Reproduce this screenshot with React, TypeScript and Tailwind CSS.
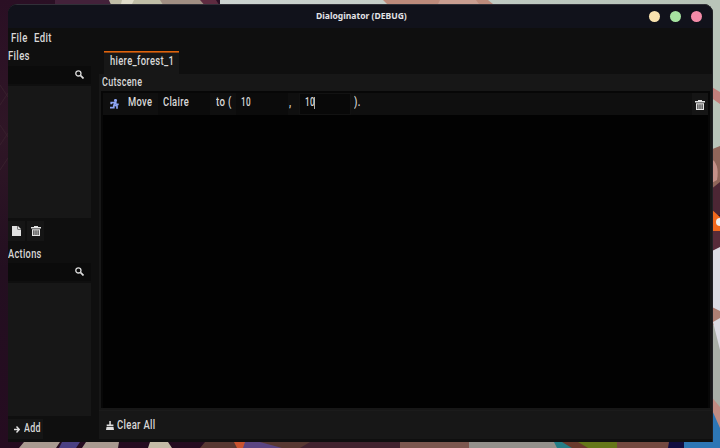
import React from "react";

function T({ children, s = 1, className = "" }: { children: React.ReactNode; s?: number; className?: string }) {
  return <span className={"inline-block origin-left whitespace-pre " + className} style={{ transform: `scaleX(${s})` }}>{children}</span>;
}

function Trash() {
  return (
    <svg className="shrink-0" width="10" height="10" viewBox="0 0 10 10" fill="#e4e4e4">
      <path d="M3 0H7V1H10V2.4H0V1H3Z" />
      <path fillRule="evenodd" d="M1 3.2H9V10H1ZM2.4 4.2V9H3.4V4.2ZM4.5 4.2V9H5.5V4.2ZM6.6 4.2V9H7.6V4.2Z" />
    </svg>
  );
}

function Search() {
  return (
    <div className="flex h-[18px] w-[83px] shrink-0 items-center justify-end bg-[#0b0b0b] pr-[7px] pb-[2px]">
      <svg width="9" height="9" viewBox="0 0 9 9" fill="none" stroke="#dcdcdc">
        <circle cx="3.4" cy="3.4" r="2.6" strokeWidth="1.3" />
        <path d="M5.4 5.4L8.5 8.5" strokeWidth="1.7" />
      </svg>
    </div>
  );
}

function Wallpaper() {
  return (
    <svg className="absolute inset-0" width="720" height="448" viewBox="0 0 720 448">
      <defs>
        <linearGradient id="left" x1="0" y1="0" x2="0" y2="1">
          <stop offset="0" stopColor="#2a0f24" />
          <stop offset=".3" stopColor="#2f1626" />
          <stop offset=".6" stopColor="#230f20" />
          <stop offset="1" stopColor="#250c20" />
        </linearGradient>
        <linearGradient id="sky" x1="0" x2="1">
          <stop offset="0" stopColor="#ccd3d0" />
          <stop offset="1" stopColor="#b5c2b6" />
        </linearGradient>
      </defs>
      <rect width="720" height="448" fill="url(#left)" />
      <path d="M0 85L8 97M0 105L8 93M0 125L8 137M0 145L8 133M0 170L8 158" stroke="#38202d" />
      <path d="M55 0H110V8H55Z" fill="#43213a" />
      <path d="M109 0H165V10H113Z" fill="#c0bda6" />
      <path d="M122 0H134L130 8H120Z" fill="#e0dcc9" />
      <path d="M220 0H720V10H220Z" fill="url(#sky)" />
      <path d="M160 0H202L222 8H165Z" fill="#a18f83" />
      <path d="M200 0H216L221 8H207Z" fill="#5e2b40" />
      <path d="M383 0H488L498 8H391Z" fill="#bd8b7b" />
      <path d="M440 0H476L482 8H436Z" fill="#c99e90" />
      <rect x="710" width="10" height="150" fill="#b9c4b9" />
      <path d="M710 86L720 92V104L710 97Z" fill="#c4807c" />
      <path d="M710 150L720 146V190H710Z" fill="#90665a" />
      <path d="M710 158Q720 163 717 180L710 184Z" fill="#c59189" />
      <path d="M710 190L720 182V215H710Z" fill="#4c2634" />
      <path d="M710 208L720 217V232H710Z" fill="#f0691d" />
      <circle cx="720" cy="222" r="4" fill="#eee" />
      <path d="M710 231H720V248L710 254Z" fill="#572b39" />
      <path d="M710 252L720 247V340H710Z" fill="#dddde4" />
      <path d="M710 306L720 311V330L710 332Z" fill="#ae8074" />
      <path d="M710 325H720V420H710Z" fill="#a9afa7" />
      <path d="M713 322L720 318V350Z" fill="#dddde4" />
      <path d="M710 395L720 407V448H710Z" fill="#c08c83" />
      <path d="M24 442H60L56 448H19ZM86 442H119L118 448H82Z" fill="#a99a90" />
      <path d="M62 442H80L76 448H59Z" fill="#4a4083" />
      <path d="M150 442H168L172 448H148Z" fill="#c4bba6" />
      <path d="M205 442H360V448H200Z" fill="#583832" />
      <path d="M240 442H260L282 448H240Z" fill="#5b4582" />
      <path d="M234 442H245L243 448H237Z" fill="#c9532f" />
      <path d="M310 442H400V448H300Z" fill="#42232f" />
      <path d="M400 442H470V448H400Z" fill="#7c574f" />
      <path d="M469 442H558V448H469Z" fill="#93908b" />
      <path d="M554 442H575L580 448H557Z" fill="#257e86" />
      <path d="M568 442H617V448H577Z" fill="#657718" />
      <path d="M562 442H578L588 448H572Z" fill="#6a3a2c" />
      <path d="M617 442H670V448H617Z" fill="#744940" />
      <path d="M669 442H685V448H668Z" fill="#100d40" />
      <path d="M684 442H708L712 410L720 428V448H684Z" fill="#2d76b5" />
    </svg>
  );
}

export default function App() {
  return (
    <div className="relative h-[448px] w-[720px] overflow-hidden font-['Roboto','Liberation_Sans',sans-serif] text-[12px] leading-[16px] font-medium tracking-[0.4px] text-[#d8d8d8]">
      <Wallpaper />
      <div className="relative ml-2 pt-1">
        <div className="flex h-[438px] w-[705px] flex-col overflow-hidden rounded-t-[9px] bg-[#0f0f0f] shadow-[inset_0_1px_0_#303038,inset_-1px_0_0_#202024]">
          <header className="mt-px mr-px flex h-[23px] shrink-0 items-center rounded-t-[8px] bg-[#11121b]">
            <div className="w-[308px]" />
            <div className="w-[90px] pb-px font-['Noto_Sans',sans-serif] text-[9.5px] font-bold tracking-normal text-[#e2e2e6]"><T s={0.9}>Dialoginator (DEBUG)</T></div>
            <div className="ml-auto flex gap-[10px] pr-[10px]">
              <i className="size-[11px] rounded-full bg-[#f9e2af]" />
              <i className="size-[11px] rounded-full bg-[#a6e3a1]" />
              <i className="size-[11px] rounded-full bg-[#f38ba8]" />
            </div>
          </header>
          <div className="flex h-[414px]">
            <aside className="flex w-[83px] shrink-0 flex-col">
              <nav className="flex h-[18px] pt-[2px] pl-[3px]">
                <div className="w-[23px]"><T s={0.8}>File</T></div><T s={0.8}>Edit</T>
              </nav>
              <div className="h-5 pt-[2px]"><T s={0.8}>Files</T></div>
              <Search />
              <div className="mt-[2px] h-[132px] bg-[#171717]" />
              <div className="mt-[3px] flex h-5 gap-[2px]">
                <button className="flex w-[17px] items-center justify-center bg-[#151515] pb-px">
                  <svg width="9" height="10" viewBox="0 0 9 10" fill="#e0e0e0"><path d="M0 0H5.5V3.5H9V10H0ZM6 0L9 3H6Z" /></svg>
                </button>
                <button className="flex w-[17px] items-center justify-center bg-[#151515] pb-px"><Trash /></button>
              </div>
              <div className="h-[22px] pt-[5px]"><T s={0.77}>Actions</T></div>
              <Search />
              <div className="mt-[2px] h-[133px] bg-[#171717]" />
              <button className="mt-[3px] flex h-5 w-[35px] items-center bg-[#151515] pl-[6px]">
                <svg className="mt-px shrink-0" width="6" height="7" viewBox="0 0 6 7" fill="none" stroke="#e0e0e0" strokeWidth="1.4"><path d="M0 3.5H5M2.5 .5L5.2 3.5L2.5 6.5" /></svg>
                <span className="ml-[4px] w-4 shrink-0 pb-[3px] text-left"><T s={0.74}>Add</T></span>
              </button>
            </aside>
            <main className="ml-2 flex w-[613px] flex-col">
              <div className="flex h-[46px] items-end pl-[5px]">
                <div className="h-[23px] w-[75px] bg-[#171717]">
                  <div className="h-px bg-[#e0630c]" />
                  <div className="h-px bg-[#8f4410]" />
                  <div className="pl-[6px]"><T s={0.785}>hiere_forest_1</T></div>
                </div>
              </div>
              <section className="flex h-[365px] flex-col bg-[#171717]">
                <div className="h-[17px] pl-[3px]"><T s={0.75}>Cutscene</T></div>
                <div className="ml-[2px] h-[317px] w-[609px] border-2 border-b-0 border-[#070707] bg-[#020202]">
                  <div className="flex h-[22px] bg-[#0f0f0f] *:pt-px">
                    <div className="w-[25px] pl-[7px]">
                      <svg className="mt-[5px]" width="9" height="10" viewBox="0 0 9 10" fill="none" stroke="#8da5f3" strokeWidth="1.7"><circle cx="5.5" cy="1.4" r="1.5" fill="#8da5f3" stroke="none" /><path d="M1.2 5.2V3.6H5.5L4 6L7 7V9.7M5.3 4L6.3 5.3H8.7M3.8 6V8.6H0" /></svg>
                    </div>
                    <div className="w-[30px]"><T s={0.78}>Move</T></div>
                    <div className="w-[52px] bg-[#0b0b0b] pl-[5px]"><T s={0.78}>Claire</T></div>
                    <div className="w-[26px] pl-[6px]"><T s={0.8}>to (</T></div>
                    <div className="w-[52px] bg-[#0b0b0b] pl-[5px]"><T s={0.68}>10</T></div>
                    <div className="w-[11px] pl-[1px]"><T s={0.8}>,</T></div>
                    <div className="flex w-[52px] bg-[#080808] pl-[6px] shadow-[inset_0_0_0_1px_#121212]">
                      <div className="w-[9px]"><T s={0.68}>10</T></div><i className="mt-[3px] h-[12px] w-px bg-[#aaaaaa]" />
                    </div>
                    <div className="pl-[3px]"><T s={0.8}>).</T></div>
                    <div className="ml-auto flex w-4 items-center justify-center bg-[#151515]"><Trash /></div>
                  </div>
                </div>
                <footer className="mt-[2px] flex h-[29px] items-center border-t border-[#1b1b1b] pl-[7px]">
                  <svg className="mt-px" width="8" height="9" viewBox="0 0 8 9" fill="#e0e0e0"><path d="M3.3 0H4.8V3.5H7.4V5.3H.7V3.5H3.3ZM.5 6H7.5L8 9H0Z" /></svg>
                  <span className="ml-[3px]"><T s={0.79}>Clear All</T></span>
                </footer>
              </section>
            </main>
          </div>
        </div>
      </div>
    </div>
  );
}
